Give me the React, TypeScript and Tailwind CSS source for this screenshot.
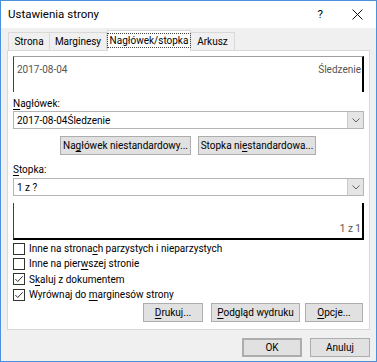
import React from 'react';

const U = ({ children }: { children: React.ReactNode }) => <span className="underline underline-offset-[1.5px]">{children}</span>;

const Button = ({ children, className = '' }: { children: React.ReactNode; className?: string }) => (
  <div className={`h-[19px] flex items-center justify-center bg-[#e1e1e1] border border-[#adadad] text-[10px] ${className}`}>
    <span className="whitespace-nowrap">{children}</span>
  </div>
);

const Select = ({ value }: { value: string }) => (
  <div className="h-[18px] flex items-stretch border border-[#b4b4b4] bg-white">
    <div className="flex-1 flex items-center pl-[3px] text-[10px]">{value}</div>
    <div className="w-[16px] bg-[#e5e5e5] border-l border-[#c8c8c8] flex items-center justify-center">
      <svg width="8" height="5" viewBox="0 0 8 5">
        <path d="M0.5 0.5 L4 4 L7.5 0.5" fill="none" stroke="#606060" strokeWidth="1" />
      </svg>
    </div>
  </div>
);

const Check = ({ checked, children }: { checked?: boolean; children: React.ReactNode }) => (
  <div className="h-[15.3px] flex items-center gap-[4px] text-[10px]">
    <div className="w-[12px] h-[12px] border border-[#333333] bg-white flex items-center justify-center shrink-0">
      {checked && (
        <svg width="10" height="10" viewBox="0 0 10 10">
          <path d="M1.3 5 L3.8 7.5 L8.7 2.2" fill="none" stroke="#333333" strokeWidth="1" />
        </svg>
      )}
    </div>
    <span className="whitespace-nowrap">{children}</span>
  </div>
);

const App = () => {
  return (
    <div className="w-[377px] h-[362px] border border-[#4a93dc] bg-[#f0f0f0] flex flex-col text-black" style={{ fontFamily: '"Segoe UI", Roboto, sans-serif' }}>
      {/* title bar */}
      <div className="h-[27px] bg-white flex items-center pl-[7px] shrink-0">
        <span className="text-[11.5px] flex-1">Ustawienia strony</span>
        <span className="text-[11.5px] mr-[29px]">?</span>
        <svg width="11" height="11" viewBox="0 0 11 11" className="mr-[13px]">
          <path d="M0.5 0.5 L10.5 10.5 M10.5 0.5 L0.5 10.5" stroke="#111" strokeWidth="1" />
        </svg>
      </div>

      {/* tabs */}
      <div className="flex items-end pl-[7px] h-[21px] mt-[1px] relative z-10 text-[10px]">
        <div className="h-[18px] w-[42px] flex items-center justify-center bg-[#f0f0f0] border border-b-0 border-[#d9d9d9]">Strona</div>
        <div className="h-[18px] w-[57px] flex items-center justify-center bg-[#f0f0f0] border border-l-0 border-b-0 border-[#d9d9d9]">Marginesy</div>
        <div className="h-[21px] w-[84px] flex items-center justify-center bg-white border border-b-0 border-[#d9d9d9] -mb-[1px] pb-[1px]">
          <span className="border border-dotted border-[#444] px-[2px] leading-[13px]">Nagłówek/stopka</span>
        </div>
        <div className="h-[18px] w-[44px] flex items-center justify-center bg-[#f0f0f0] border border-l-0 border-b-0 border-[#d9d9d9]">Arkusz</div>
      </div>

      {/* panel */}
      <div className="mx-[6px] h-[280px] bg-white border border-[#d9d9d9] px-[5px] pt-[5px] flex flex-col">
        <div className="h-[36px] shrink-0 border-t border-t-[#a0a0a0] border-l border-l-[#404040] border-r-2 border-r-black flex items-start justify-between pt-[5px] pl-[3px] pr-[1px] text-[10px] text-[#555]">
          <span>2017-08-04</span>
          <span>Śledzenie</span>
        </div>

        <div className="text-[10px] mt-[5px] h-[14px] leading-[14px]"><U>N</U>agłówek:</div>
        <div className="mt-[0px]"><Select value="2017-08-04Śledzenie" /></div>

        <div className="flex mt-[7px] pl-[47px] gap-[7px]">
          <Button className="w-[131px]">Na<U>g</U>łówek niestandardowy...</Button>
          <Button className="w-[118px]">Stopka ni<U>e</U>standardowa...</Button>
        </div>

        <div className="text-[10px] mt-[8px] h-[14px] leading-[14px]"><U>S</U>topka:</div>
        <div className="mt-[1px]"><Select value="1 z ?" /></div>

        <div className="h-[37px] shrink-0 mt-[7px] border-l border-l-[#404040] border-r-2 border-r-black border-b-2 border-b-black flex items-end justify-end pr-[1px] pb-[2px] text-[10px] text-[#555]">
          <span>1 z 1</span>
        </div>

        <div className="mt-[1px] flex flex-col">
          <Check>Inne na strona<U>c</U>h parzystych i nieparzystych</Check>
          <Check>Inne na pier<U>w</U>szej stronie</Check>
          <Check checked>S<U>k</U>aluj z dokumentem</Check>
          <Check checked>Wyrównaj do <U>m</U>arginesów strony</Check>
        </div>

        <div className="flex justify-end mt-[1px] pr-[1px]">
          <Button className="w-[60px]"><U>D</U>rukuj...</Button>
          <Button className="w-[89px] ml-[8px]"><U>P</U>odgląd wydruku</Button>
          <Button className="w-[58px] ml-[5px]"><U>O</U>pcje...</Button>
        </div>
      </div>

      {/* bottom buttons */}
      <div className="flex justify-end mt-[8px] pr-[6px] gap-[8px]">
        <Button className="w-[60px] border-[#0078d7] border-2">OK</Button>
        <Button className="w-[60px]">Anuluj</Button>
      </div>
    </div>
  );
};

export default App;
